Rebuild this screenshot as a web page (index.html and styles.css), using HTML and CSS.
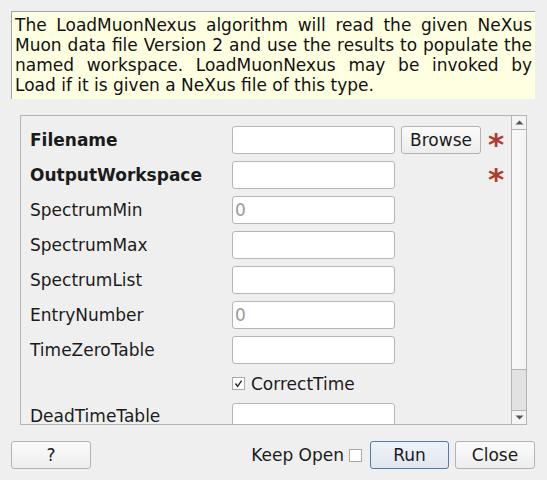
FILE: index.html
```html
<!DOCTYPE html>
<html>
<head>
<meta charset="utf-8">
<link rel="stylesheet" href="styles.css">
</head>
<body>
<div class="dialog">
  <div class="desc">The LoadMuonNexus algorithm will read the given NeXus Muon data file Version 2 and use the results to populate the named workspace. LoadMuonNexus may be invoked by Load if it is given a NeXus file of this type.</div>

  <div class="scrollarea">
    <div class="viewport">
      <div class="form">
        <div class="label bold">Filename</div>
        <div class="input"></div>
        <div class="btn browse">Browse</div>
        <div class="star">*</div>

        <div class="label bold">OutputWorkspace</div>
        <div class="input"></div>
        <div></div>
        <div class="star">*</div>

        <div class="label">SpectrumMin</div>
        <div class="input"><span class="ph">0</span></div>
        <div></div><div></div>

        <div class="label">SpectrumMax</div>
        <div class="input"></div>
        <div></div><div></div>

        <div class="label">SpectrumList</div>
        <div class="input"></div>
        <div></div><div></div>

        <div class="label">EntryNumber</div>
        <div class="input"><span class="ph">0</span></div>
        <div></div><div></div>

        <div class="label">TimeZeroTable</div>
        <div class="input"></div>
        <div></div><div></div>

        <div></div>
        <div class="checkrow">
          <span class="checkbox"><svg width="11" height="11" viewBox="0 0 11 11"><path d="M2.5 5.5 L4.6 8.3 L8.6 2.6" fill="none" stroke="#222" stroke-width="1.4"/></svg></span>
          <span>CorrectTime</span>
        </div>
        <div></div><div></div>

        <div class="label last">DeadTimeTable</div>
        <div class="input"></div>
        <div></div><div></div>
      </div>
    </div>
    <div class="scrollbar">
      <div class="sb-btn"><svg width="9" height="5" viewBox="0 0 9 5"><path d="M0.5 4.5 L4.5 0.5 L8.5 4.5 Z" fill="#555"/></svg></div>
      <div class="sb-track"></div>
      <div class="sb-handle"></div>
      <div class="sb-btn down"><svg width="9" height="5" viewBox="0 0 9 5"><path d="M0.5 0.5 L4.5 4.5 L8.5 0.5 Z" fill="#555"/></svg></div>
    </div>
  </div>

  <div class="bottom">
    <div class="btn help">?</div>
    <div class="spacer"></div>
    <span class="keep">Keep Open</span>
    <span class="checkbox keepbox"></span>
    <div class="btn run">Run</div>
    <div class="btn close">Close</div>
  </div>
</div>
</body>
</html>
```

FILE: styles.css
```css
html, body {
  margin: 0;
  padding: 0;
  background: #efefef;
}
body {
  font-family: "DejaVu Sans", "Noto Sans", sans-serif;
  font-size: 17px;
  color: #1b1b1b;
  width: 547px;
  height: 480px;
  overflow: hidden;
}
.dialog {
  display: flex;
  flex-direction: column;
}
.desc {
  margin: 11px 12px 0 11px;
  height: 88px;
  box-sizing: border-box;
  background: #ffffe1;
  border-top: 1px solid #a3a3a3;
  border-left: 1px solid #a3a3a3;
  padding: 3px 3px 0 3px;
  text-align: justify;
  line-height: 20px;
  color: #111;
}
.scrollarea {
  margin: 16px 0 0 20px;
  width: 507px;
  height: 310px;
  box-sizing: border-box;
  border: 1px solid #b4b4b4;
  display: flex;
}
.viewport {
  flex: 1;
  overflow: hidden;
  padding: 10px 0 0 9px;
}
.form {
  display: grid;
  grid-template-columns: 196px 163px 80px 20px;
  grid-template-rows: repeat(7, 28px) 25px 28px;
  column-gap: 6px;
  row-gap: 7px;
}
.label {
  display: flex;
  align-items: center;
  white-space: nowrap;
  color: #1b1b1b;
}
.label.last {
  align-items: flex-start;
  padding-top: 3px;
}
.bold {
  font-weight: bold;
}
.input {
  box-sizing: border-box;
  height: 28px;
  background: #ffffff;
  border: 1px solid #b6b6b6;
  border-radius: 3px;
  display: flex;
  align-items: center;
  padding-left: 2px;
}
.ph {
  color: #9a9a9a;
}
.btn {
  box-sizing: border-box;
  height: 28px;
  border: 1px solid #b3b3b3;
  border-radius: 3px;
  background: linear-gradient(#fbfbfb, #ededed);
  display: flex;
  align-items: center;
  justify-content: center;
  color: #1b1b1b;
}
.browse {
  width: 80px;
}
.star {
  color: #b03a2c;
  font-weight: bold;
  font-size: 31px;
  line-height: 28px;
  padding-top: 4px;
  padding-left: 1px;
  height: 28px;
  box-sizing: border-box;
  overflow: visible;
}
.checkrow {
  display: flex;
  align-items: center;
  gap: 6px;
}
.checkbox {
  width: 13px;
  height: 13px;
  box-sizing: border-box;
  border: 1px solid #a9a9a9;
  background: #ffffff;
  display: inline-flex;
  align-items: center;
  justify-content: center;
  flex: none;
}
.checkbox svg {
  display: block;
}
.scrollbar {
  width: 14px;
  border-left: 1px solid #b4b4b4;
  display: flex;
  flex-direction: column;
}
.sb-btn {
  height: 14px;
  flex: none;
  background: #f4f4f4;
  border-bottom: 1px solid #b4b4b4;
  display: flex;
  align-items: center;
  justify-content: center;
  box-sizing: border-box;
}
.sb-btn.down {
  border-bottom: none;
  border-top: 1px solid #b4b4b4;
}
.sb-track {
  flex: 1;
  background: linear-gradient(90deg, #f9f9f9, #f3f3f3);
}
.sb-handle {
  height: 41px;
  flex: none;
  background: #e2e2e2;
  border-top: 1px solid #b4b4b4;
  box-sizing: border-box;
}
.bottom {
  margin: 16px 12px 0 11px;
  display: flex;
  align-items: center;
  height: 28px;
}
.help {
  width: 80px;
}
.spacer {
  flex: 1;
}
.keep {
  margin-right: 5px;
}
.keepbox {
  margin-right: 8px;
}
.run {
  width: 79px;
  border-color: #4f7ba6;
  background: linear-gradient(#eef3f7, #dfe7ef);
  margin-right: 6px;
}
.close {
  width: 80px;
}
```
